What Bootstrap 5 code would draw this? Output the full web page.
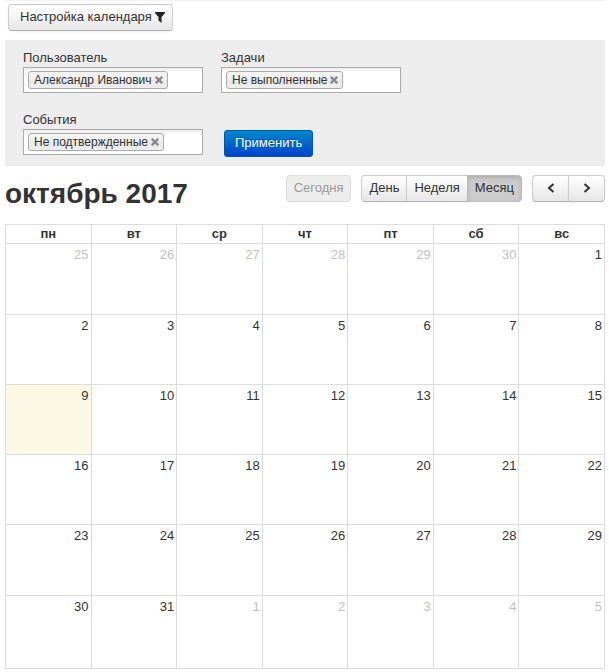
<!DOCTYPE html>
<html lang="ru">
<head>
<meta charset="utf-8">
<meta name="viewport" content="width=device-width, initial-scale=1">
<title>Календарь</title>
<link href="https://cdn.jsdelivr.net/npm/bootstrap@5.3.0/dist/css/bootstrap.min.css" rel="stylesheet">
<style>
body { font-family: "Liberation Sans", Arial, sans-serif; font-size: 13px; line-height: 18px; color: #333; background: #fff; }
.page { margin: 0 4px 0 5px; border-top: 1px solid #f2f2f2; }
.btn-tool { --bs-btn-font-size: 13px; --bs-btn-line-height: 18px; --bs-btn-padding-y: 3px; --bs-btn-padding-x: 7px; --bs-btn-border-radius: 4px;
  --bs-btn-color: #333; --bs-btn-hover-color: #333; --bs-btn-border-color: #ccc; --bs-btn-hover-border-color: #bbb;
  --bs-btn-active-color: #333; --bs-btn-active-bg: #ccc; --bs-btn-active-border-color: #bbb;
  --bs-btn-disabled-color: #999; --bs-btn-disabled-bg: #ededed; --bs-btn-disabled-border-color: #ddd; --bs-btn-disabled-opacity: 1;
  height: 27px; padding-bottom: 4px; background-image: linear-gradient(#fff, #e6e6e6); border-bottom-color: #b3b3b3;
  box-shadow: inset 0 1px 0 rgba(255,255,255,.2), 0 1px 2px rgba(0,0,0,.05); }
.btn-tool.active { background-image: none; box-shadow: inset 0 2px 4px rgba(0,0,0,.15); }
.btn-tool:disabled { background-image: none; box-shadow: none; }
.btn-settings { margin: 3px 0 9px 3px; padding-left: 11px; padding-right: 7px; gap: 3px; }
.btn-apply { --bs-btn-font-size: 13px; --bs-btn-line-height: 18px; --bs-btn-padding-y: 3px; --bs-btn-padding-x: 10px; --bs-btn-border-radius: 3px;
  --bs-btn-color: #fff; --bs-btn-hover-color: #fff; --bs-btn-border-color: #0055b3; --bs-btn-bg: #04c;
  height: 27px; margin: 0 0 -2px 3px; padding-bottom: 4px; background-image: linear-gradient(#08c, #04c); text-shadow: 0 -1px 0 rgba(0,0,0,.25); }
.filters { display: grid; grid-template-columns: repeat(2, 180px); gap: 17px 18px; padding: 8px 18px 11px; background: #ededed; }
.filters label { display: block; line-height: 19px; }
.picker { height: 26px; padding: 0 4px; border: 1px solid #aaa; background: linear-gradient(#eee 1px, #fff 4px); }
.picker input { min-width: 0; width: 0; border: 0; padding: 0; outline: 0; background: transparent; }
.chip { height: 18px; padding: 0 4px 0 5px; border: 1px solid #aaa; border-radius: 3px; font-size: 12px; line-height: 16px; white-space: nowrap;
  background: linear-gradient(#f4f4f4, #f0f0f0 50%, #e8e8e8 52%, #eee); }
.chip button { border: 0; padding: 0; background: none; width: 8px; height: 16px; margin-left: 3px; }
.chip svg { display: block; }
.toolbar { padding: 9px 0 11px; }
.toolbar h1 { font-size: 28px; line-height: 38px; color: #333; }
.toolbar .btn-tool { flex: 0 0 auto; }
.toolbar .nav-btn { width: 37px; }
.tool-groups { gap: 10px; }
.month { margin-bottom: 3px; table-layout: fixed; width: 100%; border-collapse: collapse; }
.month th, .month td { border: 1px solid #ddd; padding: 0 2px; }
.month th { height: 19px; line-height: 18px; text-align: center; }
.month td { height: 70px; padding-top: 2px; text-align: right; vertical-align: top; }
.month tr:first-child td { height: 71px; }
.month tr:nth-child(5) td { height: 71px; }
.month tr:last-child td { height: 73px; }
.month .other { color: #c2c2c2; }
.month .today { background: #fcf8e3; }
</style>
</head>
<body>
<main class="page">
  <button type="button" class="btn btn-tool btn-settings d-flex align-items-center">Настройка календаря
    <svg width="10" height="11" viewBox="0 0 10 11" fill="#222" aria-hidden="true"><path d="M0 0h10v1L6.5 5v6L3.5 8.5V5L0 1z"/></svg>
  </button>
  <form class="filters">
    <div><label for="user">Пользователь</label>
      <div class="picker d-flex align-items-center"><span class="chip d-flex">Александр Иванович<button type="button" aria-label="Удалить"><svg width="8" height="16" viewBox="0 0 8 16" stroke="#888" stroke-width="2.4"><path d="M.8 4.8l6.4 6.4M7.2 4.8L.8 11.2"/></svg></button></span><input id="user" class="flex-grow-1" type="text"></div></div>
    <div><label for="tasks">Задачи</label>
      <div class="picker d-flex align-items-center"><span class="chip d-flex">Не выполненные<button type="button" aria-label="Удалить"><svg width="8" height="16" viewBox="0 0 8 16" stroke="#888" stroke-width="2.4"><path d="M.8 4.8l6.4 6.4M7.2 4.8L.8 11.2"/></svg></button></span><input id="tasks" class="flex-grow-1" type="text"></div></div>
    <div><label for="events">События</label>
      <div class="picker d-flex align-items-center"><span class="chip d-flex">Не подтвержденные<button type="button" aria-label="Удалить"><svg width="8" height="16" viewBox="0 0 8 16" stroke="#888" stroke-width="2.4"><path d="M.8 4.8l6.4 6.4M7.2 4.8L.8 11.2"/></svg></button></span><input id="events" class="flex-grow-1" type="text"></div></div>
    <div class="d-flex align-items-end"><button type="button" class="btn btn-apply">Применить</button></div>
  </form>
  <div class="toolbar d-flex align-items-start">
    <h1 class="fw-bold m-0 me-auto">октябрь 2017</h1>
    <div class="tool-groups d-flex">
      <button type="button" class="btn btn-tool" disabled>Сегодня</button>
      <div class="btn-group" role="group" aria-label="Вид">
        <button type="button" class="btn btn-tool">День</button>
        <button type="button" class="btn btn-tool">Неделя</button>
        <button type="button" class="btn btn-tool active">Месяц</button>
      </div>
      <div class="btn-group" role="group" aria-label="Переход">
        <button type="button" class="btn btn-tool nav-btn" aria-label="Назад"><svg class="d-block mx-auto" width="8" height="18" viewBox="0 0 8 18" fill="none" stroke="#333" stroke-width="2"><path d="M6.5 5L2 9 6.5 13"/></svg></button>
        <button type="button" class="btn btn-tool nav-btn" aria-label="Вперёд"><svg class="d-block mx-auto" width="8" height="18" viewBox="0 0 8 18" fill="none" stroke="#333" stroke-width="2"><path d="M1.5 5L6 9 1.5 13"/></svg></button>
      </div>
    </div>
  </div>
  <table class="month">
    <thead><tr><th scope="col">пн</th><th scope="col">вт</th><th scope="col">ср</th><th scope="col">чт</th><th scope="col">пт</th><th scope="col">сб</th><th scope="col">вс</th></tr></thead>
    <tbody>
      <tr><td class="other">25</td><td class="other">26</td><td class="other">27</td><td class="other">28</td><td class="other">29</td><td class="other">30</td><td>1</td></tr>
      <tr><td>2</td><td>3</td><td>4</td><td>5</td><td>6</td><td>7</td><td>8</td></tr>
      <tr><td class="today">9</td><td>10</td><td>11</td><td>12</td><td>13</td><td>14</td><td>15</td></tr>
      <tr><td>16</td><td>17</td><td>18</td><td>19</td><td>20</td><td>21</td><td>22</td></tr>
      <tr><td>23</td><td>24</td><td>25</td><td>26</td><td>27</td><td>28</td><td>29</td></tr>
      <tr><td>30</td><td>31</td><td class="other">1</td><td class="other">2</td><td class="other">3</td><td class="other">4</td><td class="other">5</td></tr>
    </tbody>
  </table>
</main>
<script src="https://cdn.jsdelivr.net/npm/bootstrap@5.3.0/dist/js/bootstrap.bundle.min.js"></script>
</body>
</html>
